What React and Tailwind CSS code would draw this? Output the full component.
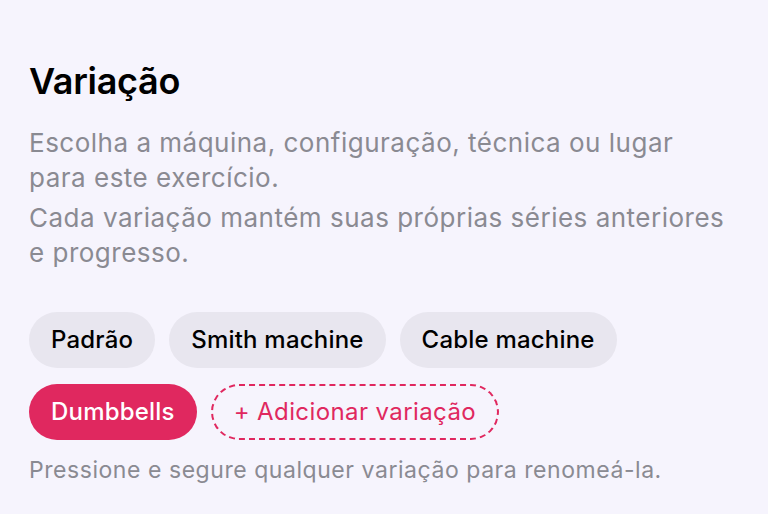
const variations = ['Padrão', 'Smith machine', 'Cable machine', 'Dumbbells'];

export default function App() {
  const selected = 'Dumbbells';

  return (
    <div
      className="w-[768px] h-[514px] overflow-hidden bg-[#f6f4fd] pl-[29px] pr-[36px] pt-[57px]"
      style={{ fontFamily: 'Inter, "Noto Sans", sans-serif' }}
    >
      {/* ── Header ── */}
      <h1 className="text-[36px] leading-[48px] font-semibold text-black tracking-[-0.3px]">
        Variação
      </h1>

      <div className="mt-[20px] text-[26px] leading-[35px] text-[#8a8a92] tracking-[0.5px]">
        <p>Escolha a máquina, configuração, técnica ou lugar para este exercício.</p>
        <p className="mt-[5px]">Cada variação mantém suas próprias séries anteriores e progresso.</p>
      </div>

      {/* ── Chips ── */}
      <div className="mt-[42px] flex flex-wrap gap-x-[14px] gap-y-[16px]">
        {variations.map((v) => (
          <button
            key={v}
            className={`h-[56px] px-[22px] rounded-full text-[24px] font-medium tracking-[0.2px] ${
              v === selected ? 'bg-[#e0285f] text-white' : 'bg-[#e8e6ef] text-black'
            }`}
          >
            {v}
          </button>
        ))}
        <button className="h-[56px] px-[21px] rounded-full border-[2.5px] border-dashed border-[#e0285f] text-[24px] text-[#e0285f] tracking-[0.4px]">
          + Adicionar variação
        </button>
      </div>

      <p className="mt-[14px] text-[23px] leading-[32px] text-[#8a8a92] tracking-[0.55px]">
        Pressione e segure qualquer variação para renomeá-la.
      </p>
    </div>
  );
}
